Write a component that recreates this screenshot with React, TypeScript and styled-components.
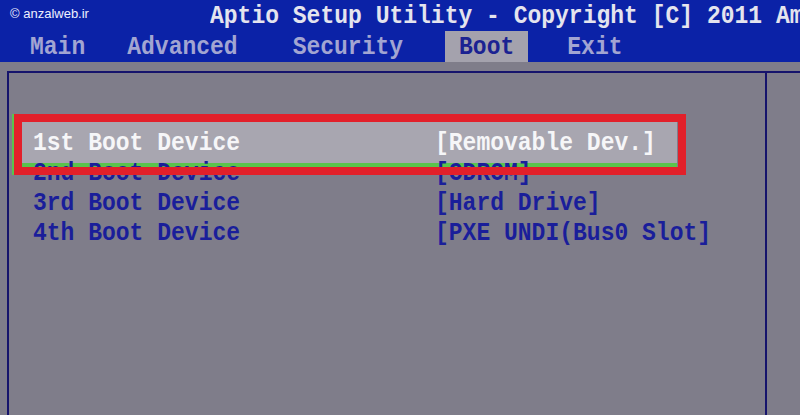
import React from 'react'
import styled, { createGlobalStyle } from 'styled-components'

const GlobalStyle = createGlobalStyle`
  html, body {
    margin: 0;
    padding: 0;
    background: #7f7d8a;
  }
`

const MONO = `'Liberation Mono', 'DejaVu Sans Mono', monospace`

const Colors = {
  headerBlue: '#0b22a7',
  titleText: '#e4e4ee',
  tabText: '#a2a5d2',
  tabActiveBg: '#a4a2ad',
  tabActiveText: '#1b2292',
  panel: '#7f7d8a',
  line: '#16146c',
  rowText: '#1a1e9a',
  selectedBg: '#a8a6b0',
  selectedText: '#f6f6f8',
  red: '#e2202a',
  green: '#5ac34c',
}

interface Tab {
  label: string
  offset: number
  active?: boolean
}

const tabs: Tab[] = [
  { label: 'Main', offset: 16 },
  { label: 'Advanced', offset: 14 },
  { label: 'Security', offset: 27 },
  { label: 'Boot', offset: 28, active: true },
  { label: 'Exit', offset: 25 },
]

interface BootRow {
  name: string
  value: string
  selected?: boolean
}

const rows: BootRow[] = [
  { name: '1st Boot Device', value: '[Removable Dev.]', selected: true },
  { name: '2nd Boot Device', value: '[CDROM]' },
  { name: '3rd Boot Device', value: '[Hard Drive]' },
  { name: '4th Boot Device', value: '[PXE UNDI(Bus0 Slot]' },
]

export default function App() {
  return (
    <Screen>
      <GlobalStyle />
      <Header>
        <Watermark>© anzalweb.ir</Watermark>
        <TitleRow>
          <Glyphs>Aptio Setup Utility - Copyright [C] 2011 American Megatrends, Inc.</Glyphs>
        </TitleRow>
        <TabBar>
          {tabs.map((tab) => (
            <TabItem key={tab.label} $offset={tab.offset} $active={tab.active}>
              <Glyphs>{tab.label}</Glyphs>
            </TabItem>
          ))}
        </TabBar>
      </Header>
      <Body>
        <Frame>
          <MainPanel>
            {rows.map((row) => (
              <Row key={row.name} $selected={row.selected}>
                <Glyphs>{row.name}</Glyphs>
                <Glyphs>{row.value}</Glyphs>
              </Row>
            ))}
            <Annotation />
          </MainPanel>
          <HelpPanel />
        </Frame>
      </Body>
    </Screen>
  )
}

const Screen = styled.div`
  width: 800px;
  height: 415px;
  overflow: hidden;
  display: flex;
  flex-direction: column;
  background: ${Colors.panel};
  font-family: ${MONO};
  font-weight: bold;
  font-size: 23px;
`

// the BIOS bitmap font is taller than Liberation Mono at the same advance width
const Glyphs = styled.span`
  position: relative;
  display: inline-block;
  transform: scaleY(1.13);
  transform-origin: 50% 55%;
`

const Header = styled.div`
  position: relative;
  height: 62px;
  background: ${Colors.headerBlue};
  display: flex;
  flex-direction: column;
`

const Watermark = styled.div`
  position: absolute;
  top: 6px;
  left: 10px;
  font-family: 'Liberation Sans', Arial, sans-serif;
  font-weight: normal;
  font-size: 13px;
  color: #eef0ff;
`

const TitleRow = styled.div`
  height: 31px;
  line-height: 32px;
  padding-left: 210px;
  white-space: nowrap;
  color: ${Colors.titleText};
`

const TabBar = styled.div`
  height: 31px;
  display: flex;
  align-items: stretch;
`

const TabItem = styled.div<{ $offset: number; $active?: boolean }>`
  margin-left: ${(p) => p.$offset}px;
  padding: 0 14px;
  line-height: 32px;
  color: ${(p) => (p.$active ? Colors.tabActiveText : Colors.tabText)};
  background: ${(p) => (p.$active ? Colors.tabActiveBg : 'transparent')};
`

const Body = styled.div`
  flex: 1;
  display: flex;
  padding-top: 9px;
`

const Frame = styled.div`
  flex: 1;
  margin-left: 7px;
  display: flex;
  border-top: 2px solid ${Colors.line};
`

const MainPanel = styled.div`
  position: relative;
  width: 756px;
  border-left: 2px solid ${Colors.line};
  padding-top: 55px;
  display: flex;
  flex-direction: column;
`

const HelpPanel = styled.div`
  flex: 1;
  border-left: 2px solid ${Colors.line};
`

const Row = styled.div<{ $selected?: boolean }>`
  position: relative;
  height: 30px;
  line-height: 30px;
  padding-left: 24px;
  display: grid;
  grid-template-columns: 402px 1fr;
  white-space: nowrap;
  color: ${(p) => (p.$selected ? Colors.selectedText : Colors.rowText)};

  &::before {
    content: '';
    display: ${(p) => (p.$selected ? 'block' : 'none')};
    position: absolute;
    left: 3px;
    right: 88px;
    top: -6px;
    bottom: -9px;
    background: ${Colors.selectedBg};
    border-bottom: 4px solid ${Colors.green};
  }

  & > span {
    justify-self: start;
  }
`

const Annotation = styled.div`
  position: absolute;
  left: 5px;
  top: 41px;
  width: 672px;
  height: 61px;
  box-sizing: border-box;
  border: 8px solid ${Colors.red};
  box-shadow: -2px 0 0 ${Colors.green};
  pointer-events: none;
`
